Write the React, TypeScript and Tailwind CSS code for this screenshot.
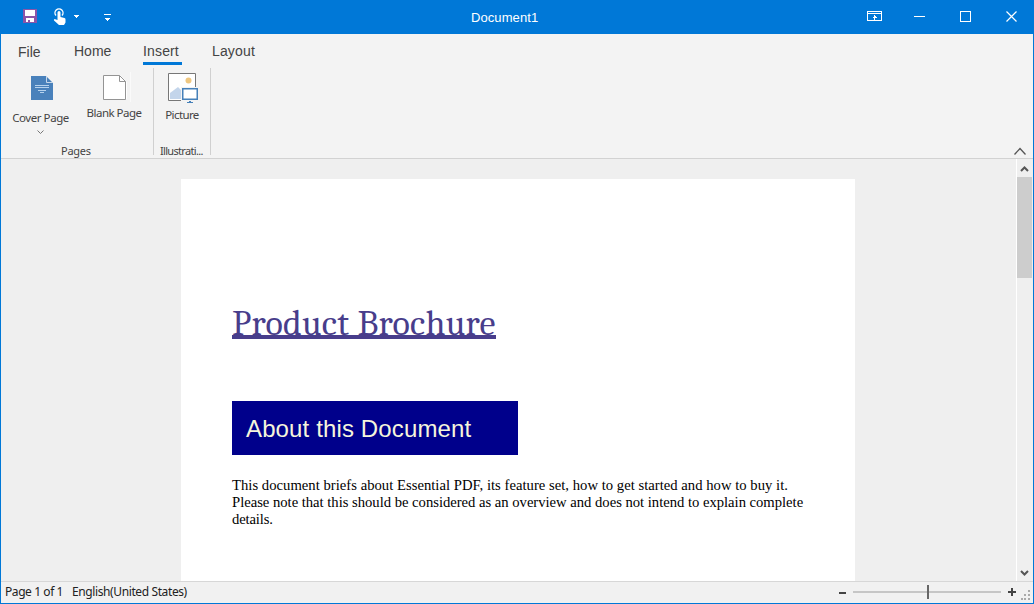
import type { ReactNode } from "react";

const UI = "font-['Liberation_Sans',Arial,sans-serif]";

function TitleBar() {
  return (
    <header className={`flex h-[34px] shrink-0 bg-[#0078d7] text-white ${UI}`}>
      <div className="flex w-[400px]">
        <svg width="130" height="34" shapeRendering="crispEdges" aria-label="Quick access">
          <path d="M23 9h14v14H23z" fill="#8b55a8" />
          <path d="M25 10h10v6H25zM26 18h8v4h-8z" fill="#fff" />
          <path d="M28 20h2v2h-2z" fill="#8b55a8" />
          <path shapeRendering="auto" d="M56 15.500a4 4 0 1 1 6 0" fill="none" stroke="#fff" strokeWidth="1.400" />
          <path shapeRendering="auto" d="M57.500 12.500a1.500 1.500 0 0 1 3 0V17l4 1q1 .3 1 1.500v3l-1.500 2.500h-5L54 20.500q-.5-1 .6-1.600l2.900 1.100z" fill="#fff" />
          <path d="M74 15h5v1h-1v1h-1v1h-1v-1h-1v-1h-1zM104 14h7v1h-7zM105 18h5v1h-1v1h-1v1h-1v-1h-1v-1h-1z" fill="#fff" />
        </svg>
      </div>
      <div className="flex-1 pl-[71px] pt-[10px] text-[13px] leading-4 tracking-[0.08px]">Document1</div>
      <svg width="184" height="34" fill="none" stroke="#fff" shapeRendering="crispEdges" aria-label="Window controls">
        <path d="M17.500 11.500h14v9h-14zM18 13.500h13M24.500 15v5M22.500 17.500h4M23.500 16.500h2M64 16.500h11M110.500 11.500h10v10h-10z" />
        <path d="m156.500 11.500 10 10m0-10-10 10" shapeRendering="auto" strokeWidth="1.200" />
      </svg>
    </header>
  );
}

function Tab({ children, className }: { children: ReactNode; className: string }) {
  return <button className={`flex h-[22px] items-start whitespace-nowrap text-[14px] leading-4 ${className}`}>{children}</button>;
}

function Ribbon() {
  return (
    <section className="h-[125px] shrink-0 border-b border-[#d2d2d2] bg-[#f3f3f3] text-[#444]">
      <nav className={`flex h-[31px] pt-[9px] ${UI}`}>
        <Tab className="ml-[17px] w-14 pt-px">File</Tab>
        <Tab className="w-[69px]">Home</Tab>
        <Tab className="mr-[30px] w-[39px] border-b-[3px] border-[#0078d7] tracking-[0.15px]">Insert</Tab>
        <Tab className="tracking-[0.15px]">Layout</Tab>
      </nav>
      <div className="flex h-[93px] pt-[3px] font-['Noto_Sans',sans-serif] text-[11.500px] leading-[14px]">
        <div className="flex h-[87px] w-[153px] flex-col border-r border-[#d0d0d0]">
          <div className="flex h-[77px] shrink-0">
            <button className="flex w-[79px] flex-col items-center">
              <svg width="24" height="26" className="mt-[7px] ml-[3px]">
                <path d="M1 1h15l7 7v17H1z" fill="#4981bb" />
                <path d="M16.500 1v6.500H23" fill="none" stroke="#c8d9eb" />
                <path d="M5 10.500h14M5 12.500h14M8 15.500h8M10 17.500h4" stroke="#b6d2ed" />
              </svg>
              <span className="mt-[10px] whitespace-nowrap tracking-[-0.43px]">Cover Page</span>
              <svg width="7" height="5" className="mt-[5px]" fill="none" stroke="#777"><path d="m.5.500 3 3 3-3" /></svg>
            </button>
            <button className="flex w-[68px] flex-col items-center">
              <svg width="29" height="30" className="mt-[4px] ml-[4px]">
                <path d="M1 3h17l7 7v17H1z" fill="#fff" />
                <path d="M28 0h1v30h-1z" fill="#fafafa" />
                <path d="M1.500 3.500h16l6 6v18h-22zM17.500 3.500v6h6" fill="none" stroke="#949494" />
              </svg>
              <span className="mt-[4px] whitespace-nowrap tracking-[-0.52px]">Blank Page</span>
            </button>
          </div>
          <div className="pl-[60px] text-[11px] leading-3 tracking-[-0.25px]">Pages</div>
        </div>
        <div className="flex h-[87px] w-[57px] flex-col border-r border-[#d0d0d0]">
          <button className="flex h-[77px] shrink-0 flex-col items-center">
            <svg width="32" height="32" className="mt-[5px] ml-[1px]">
              <path d="M1.500.500h27v27h-27z" fill="#fff" stroke="#777" />
              <circle cx="21.500" cy="7.500" r="3" fill="#efc780" />
              <path d="M3 26v-6l8-6 4 4v8H3z" fill="#c3d5eb" />
              <path d="M14 14h18v18H14z" fill="#f3f3f3" />
              <path d="M15.750 15.750h14.500v10.500h-14.500z" fill="#fff" stroke="#4580b9" strokeWidth="1.500" />
              <path d="M22 28h2v1h2v1h-6v-1h2z" fill="#4580b9" />
            </svg>
            <span className="mt-[3px] tracking-[-0.6px]">Picture</span>
          </button>
          <div className="pl-[6px] text-[11px] leading-3 tracking-[-0.68px]">Illustrati...</div>
        </div>
        <svg width="14" height="9" className="mt-[79px] mr-[6px] ml-auto" fill="none" stroke="#555" strokeWidth="1.300"><path d="m1.500 7.500 5.500-6 5.500 6" /></svg>
      </div>
    </section>
  );
}

function Workspace() {
  return (
    <div className="flex h-[422px] shrink-0 bg-[#efefef]">
      <main className="flex-1 overflow-hidden pt-5 pl-[180px]">
        <article className="h-[402px] w-[674px] bg-white pt-[123px] pl-[51px]">
          <h1 className="h-[99px] w-[264px] whitespace-nowrap font-[Caladea,Cambria,'Liberation_Serif',serif] text-[36px] leading-[44px] tracking-[0.26px] text-[#483d8b]">
            <span className="inline-block h-[37px] border-b-4 border-[#483d8b]">Product Brochure</span>
          </h1>
          <h2 className={`h-[54px] w-[286px] bg-[#00008b] pt-[14px] pl-[14px] text-[24px] leading-7 tracking-[0.13px] text-[#f5f5dc] ${UI}`}>About this Document</h2>
          <div className="mt-[22px] whitespace-nowrap font-['Liberation_Serif','Times_New_Roman',serif] text-[14.670px] leading-[17px] text-black">
            <p className="tracking-[0.02px]">This document briefs about Essential PDF, its feature set, how to get started and how to buy it.</p>
            <p className="tracking-[-0.02px]">Please note that this should be considered as an overview and does not intend to explain complete</p>
            <p className="tracking-[-0.15px]">details.</p>
          </div>
        </article>
      </main>
      <aside className="flex w-[17px] flex-col border-l border-white">
        <svg width="16" height="18" fill="none" stroke="#555" strokeWidth="2"><path d="m4 12 3.500-3.500L11 12" /></svg>
        <div className="h-[101px] w-[15px] bg-[#cdcdcd]" />
        <svg width="16" height="18" className="mt-auto" fill="none" stroke="#555" strokeWidth="2"><path d="m4 8 3.500 3.500L11 8" /></svg>
      </aside>
    </div>
  );
}

function StatusBar() {
  return (
    <footer className="flex h-[22px] shrink-0 border-t border-[#d7d7d7] bg-[#f1f1f1] font-['Noto_Sans',sans-serif] text-[12px] leading-[20px] text-[#222]">
      <span className="w-[67px] pl-1 whitespace-nowrap tracking-[-0.42px]">Page 1 of 1</span>
      <span className="pl-1 whitespace-nowrap tracking-[-0.39px]">English(United States)</span>
      <svg width="197" height="21" className="ml-auto" shapeRendering="crispEdges" aria-label="Zoom">
        <path d="M3 10h7v2H3zM172 9h8v2h-8zM175 6h2v8h-2z" fill="#444" />
        <path d="M17 9h148v2H17z" fill="#c6c6c6" />
        <path d="M91 3h2v14h-2z" fill="#666" />
        <path d="M192 8h2v2h-2zM188 12h2v2h-2zM192 12h2v2h-2zM185 16h2v2h-2zM188 16h2v2h-2zM192 16h2v2h-2z" fill="#aaa" />
      </svg>
    </footer>
  );
}

export default function App() {
  return (
    <div className="flex h-[604px] w-[1034px] flex-col overflow-hidden bg-[#0078d7]">
      <TitleBar />
      <div className="mx-px flex flex-col">
        <Ribbon />
        <Workspace />
        <StatusBar />
      </div>
    </div>
  );
}
